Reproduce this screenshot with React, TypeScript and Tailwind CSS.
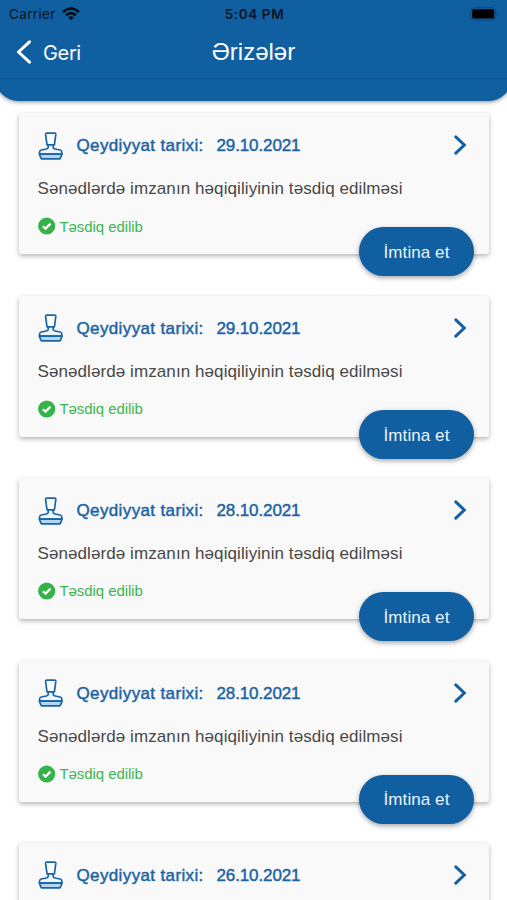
import React from "react";

const helv = "font-['Liberation_Sans',Arial,sans-serif]";

function StampIcon() {
  return (
    <svg className="mb-px h-[28px] w-[25px] shrink-0" viewBox="0 0 25 28" fill="none" stroke="#1b64a5" strokeWidth="1.7" strokeLinejoin="round" strokeLinecap="round">
      <path d="M7.6 2.4Q7.5 1.2 8.7 1.2H16.7Q17.9 1.2 17.8 2.4L16.4 12.8H9Z" fill="#fafcff" />
      <path d="M10.2 13H15.2V15.4Q15.4 16.8 17 17L22.2 18Q23.9 18.5 23.9 20.4V22.2H1.5V20.4Q1.5 18.5 3.2 18L8.4 17Q10 16.8 10.2 15.4Z" fill="#edf5fc" />
      <path d="M1.5 22.2H23.9Q23.5 24.6 22 26.8H3.4Q1.9 24.6 1.5 22.2Z" fill="#b4d6f0" />
    </svg>
  );
}

function CheckBadge() {
  return (
    <svg className="size-[18px] shrink-0" viewBox="0 0 18 18" fill="none">
      <circle cx="8.7" cy="9" r="8.6" fill="#35b34a" />
      <path d="M4.9 9.2L7.5 11.6L12.5 6.6" stroke="#fff" strokeWidth="2.2" />
    </svg>
  );
}

function RequestCard({ date, title, status }: { date: string; title?: string; status?: string }) {
  return (
    <article className="relative h-[141px] shrink-0 rounded-[3px] bg-[#f9f9f9] pl-[18.5px] pr-[22px] pt-[18px] shadow-[0_2px_5px_rgba(0,0,0,0.3)]">
      <div className="flex h-[30px] items-center text-[#1b64a5]">
        <StampIcon />
        <div className="ml-[14px] flex text-[17px] leading-[20px] [-webkit-text-stroke:0.45px_#1b64a5]">
          <span className="w-[140px] whitespace-nowrap tracking-[0.37px]">Qeydiyyat tarixi:</span>
          <span className="whitespace-nowrap tracking-[-0.12px]">{date}</span>
        </div>
        <svg className="mb-[2px] ml-auto h-[20px] w-[13px]" viewBox="0 0 13 20" fill="none" stroke="#1460a5" strokeWidth="3" strokeLinecap="round">
          <path d="M1.8 1.8L10.3 10L1.8 18.2" />
        </svg>
      </div>
      {title && <p className="mt-[18px] whitespace-nowrap text-[17px] leading-[20px] tracking-[0.085px] text-[#484848]">{title}</p>}
      {status && (
        <>
          <div className="mt-[18px] flex h-[18px] items-center gap-[4px] text-[15px] tracking-[-0.07px] text-[#3cb650]">
            <CheckBadge />
            <span className="mt-px whitespace-nowrap">{status}</span>
          </div>
          <button className="absolute right-[15px] top-[114px] h-[49px] w-[115px] whitespace-nowrap rounded-full bg-[#105fa1] pt-[2px] text-[17px] tracking-[0.08px] text-[#eaf4ff] shadow-[0_2px_5px_rgba(0,0,0,0.35)]">İmtina et</button>
        </>
      )}
    </article>
  );
}

const title = "Sənədlərdə imzanın həqiqiliyinin təsdiq edilməsi";
const status = "Təsdiq edilib";

export default function App() {
  return (
    <div className={`flex h-[900px] w-[507px] flex-col overflow-hidden bg-white ${helv}`}>
      <header className="z-10 -mx-[4px] h-[101px] shrink-0 rounded-b-[22px] bg-[#105fa1] px-[4px] shadow-[0_1px_4px_rgba(0,0,0,0.45)]">
        <div className="grid h-[28px] grid-cols-3 items-center pl-[9px] pr-[7px] font-['Inter',sans-serif] text-[13px] text-[#071523]">
          <div className="flex items-center gap-[6px]">
            <span className="text-[13.5px] tracking-[0.35px]">Carrier</span>
            <svg className="mb-px h-[14px] w-[18px]" viewBox="0 0 18 14" fill="none" stroke="#020a12" strokeWidth="2.5">
              <path d="M1 5.1Q9-2 17 5.1" />
              <path d="M4 8.3Q9 3.9 14 8.3" />
              <path d="M9 13.2L6.2 10.4Q9 8.2 11.8 10.4Z" fill="#020a12" stroke="none" />
            </svg>
          </div>
          <span className="whitespace-nowrap text-center text-[13.5px] font-semibold tracking-[0.6px]">5:04 PM</span>
          <svg className="mb-px ml-auto h-[14px] w-[30px]" viewBox="0 0 30 14">
            <rect x="0.7" y="0.7" width="25" height="12.4" rx="3.5" fill="none" stroke="#0b4779" />
            <rect x="2.2" y="2.3" width="22" height="9.2" rx="1.6" fill="#000" />
            <path d="M27.2 5Q29 7 27.2 9Z" fill="#0b4779" />
          </svg>
        </div>
        <div className="grid h-[51px] grid-cols-3 items-center border-b border-[#0e5794] pl-[16px] pr-[16px] text-white">
          <div className="flex items-center gap-[11px] font-['Inter',sans-serif] text-[20px] tracking-[-0.35px]">
            <svg className="mb-[2px] h-[24px] w-[16px]" viewBox="0 0 16 24" fill="none" stroke="#fff" strokeWidth="3" strokeLinecap="round" strokeLinejoin="round">
              <path d="M13.5 1.8L2.5 12L13.5 22.2" />
            </svg>
            <span>Geri</span>
          </div>
          <h1 className="-mt-[2px] whitespace-nowrap text-center text-[24px] leading-[28px]">Ərizələr</h1>
        </div>
      </header>
      <main className="flex flex-col gap-[41.4px] pl-[19px] pr-[18px] pt-[12.4px]">
        <RequestCard date="29.10.2021" title={title} status={status} />
        <RequestCard date="29.10.2021" title={title} status={status} />
        <RequestCard date="28.10.2021" title={title} status={status} />
        <RequestCard date="28.10.2021" title={title} status={status} />
        <RequestCard date="26.10.2021" />
      </main>
    </div>
  );
}
